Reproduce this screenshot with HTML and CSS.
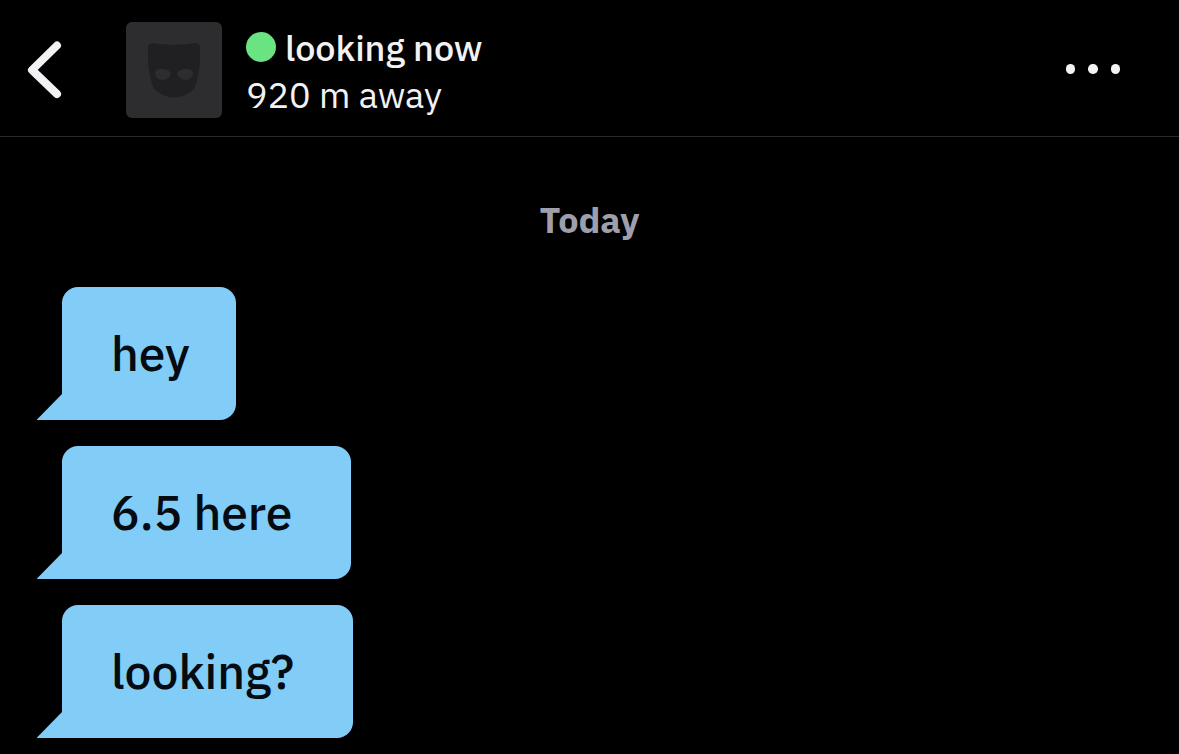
FILE: index.html
```html
<!DOCTYPE html>
<html lang="en">
<head>
<meta charset="utf-8">
<title>Chat</title>
<link rel="stylesheet" href="styles.css">
</head>
<body>
<header class="header">
  <svg class="back" viewBox="0 0 40 64" aria-label="Back"><path d="M35 8.500 10 33 35 57"/></svg>
  <svg class="avatar" viewBox="0 0 96 96" aria-label="Profile">
    <path class="mask" fill-rule="evenodd" d="M22 23.500L26 21Q37 23 48 22.700Q59 23 70 21L74 23.500V40Q73 55 68 67Q59 75.500 48.500 75.500Q37 75.500 28 67Q23 55 22 40ZM29 50Q29 57 36 58Q43 58 45 51.500Q43 47 36 47Q30 46.500 29 50ZM67 50Q67 57 60 58Q53 58 51 51.500Q53 47 60 47Q66 46.500 67 50Z"/>
  </svg>
  <div class="profile">
    <div class="name-row"><span class="online"></span><span class="name">looking now</span></div>
    <div class="distance">920 m away</div>
  </div>
  <div class="more"><i class="dot"></i><i class="dot"></i><i class="dot"></i></div>
</header>
<main class="chat">
  <div class="day">Today</div>
  <div class="bubble hey"><span>hey</span></div>
  <div class="bubble here"><span>6.5 here</span></div>
  <div class="bubble looking"><span>looking?</span></div>
</main>
</body>
</html>
```
FILE: styles.css
```css
* { box-sizing: border-box; }
body {
  margin: 0;
  height: 754px;
  overflow: hidden;
  background: #000;
  color: #f2f2f4;
  font-family: "IBM Plex Sans", "Noto Sans CJK JP", sans-serif;
  letter-spacing: -0.08px;
}
.header {
  display: flex;
  height: 137px;
  padding: 22px 59px 0 22px;
  border-bottom: 1px solid #29292b;
}
.back {
  width: 40px;
  height: 64px;
  margin: 15px 64px 0 0;
  fill: none;
  stroke: #f2f2f4;
  stroke-width: 8;
  stroke-linecap: round;
  stroke-linejoin: round;
}
.avatar { width: 96px; height: 96px; border-radius: 6px; background: #2d2d2f; }
.mask { fill: #202022; }
.profile { padding-left: 24px; }
.name-row { display: flex; align-items: center; height: 50px; }
.online { width: 30px; height: 30px; border-radius: 50%; background: #69e480; margin-right: 9px; }
.name {
  padding-top: 2px;
  font-size: 36px;
  font-weight: 500;
  line-height: 52px;
  white-space: nowrap;
}
.distance {
  font-size: 36px;
  font-weight: 400;
  line-height: 45px;
  white-space: nowrap;
}
.more { display: flex; gap: 13px; margin: 42px 0 0 auto; }
.dot { width: 9.500px; height: 9.500px; border-radius: 50%; background: #f2f2f4; }
.chat {
  display: flex;
  flex-direction: column;
  align-items: flex-start;
  gap: 26px;
  padding: 60px 0 0 62px;
}
.day {
  align-self: center;
  height: 64px;
  margin-left: -62px;
  line-height: 46px;
  font-size: 36px;
  font-weight: 700;
  color: #9f9fab;
}
.bubble {
  position: relative;
  height: 133px;
  padding-left: 49px;
  border-radius: 16px 16px 16px 0;
  background: #81cdf8;
  color: #050b10;
  font-size: 48px;
  font-weight: 500;
  line-height: 133px;
  white-space: nowrap;
}
.bubble::before {
  content: "";
  position: absolute;
  left: -25.500px;
  bottom: 0;
  width: 26.500px;
  height: 27px;
  background: #81cdf8;
  clip-path: polygon(100% 0, 100% 100%, 0 100%);
}
.hey { width: 174px; }
.here { width: 289px; }
.looking { width: 291px; }
```
